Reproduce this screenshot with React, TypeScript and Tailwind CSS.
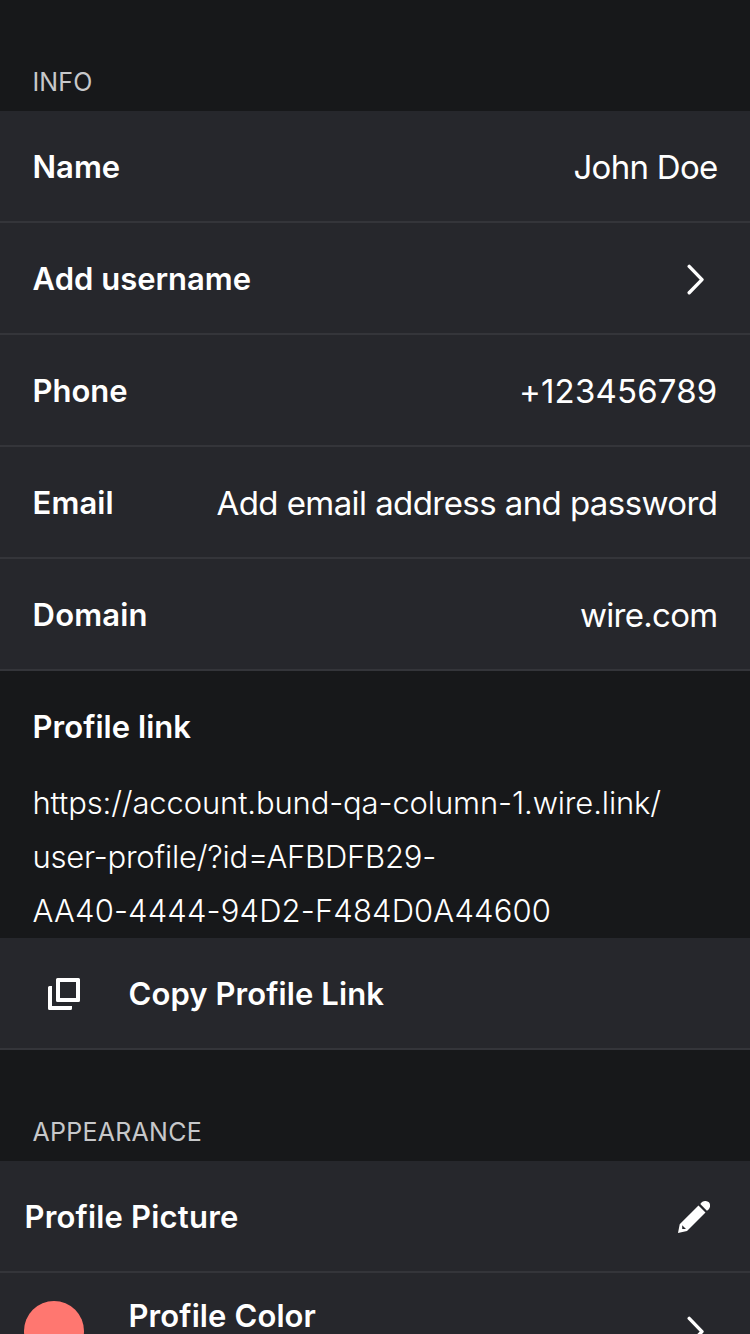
import React from "react";

type Variant = "label" | "value" | "heading" | "link";

const variants: Record<Variant, string> = {
  label: "text-[31px] font-semibold text-white",
  value: "text-[33px] font-normal text-white",
  heading: "text-[25px] font-normal text-[#c7c8ca]",
  link: "text-[31px] font-light text-white",
};

// Distributes letter spacing so that a line of text fills the given width.
function FitText({ text, width, variant }: { text: string; width: number; variant: Variant }) {
  const ref = React.useRef<HTMLSpanElement>(null);
  const [spacing, setSpacing] = React.useState(0);
  React.useLayoutEffect(() => {
    const el = ref.current;
    if (!el) return;
    el.style.letterSpacing = "0px";
    setSpacing((width - el.getBoundingClientRect().width) / text.length);
  }, [text, width]);
  return (
    <span ref={ref} className={`block w-fit whitespace-nowrap leading-[40px] ${variants[variant]}`} style={{ letterSpacing: `${spacing}px` }}>
      {text}
    </span>
  );
}

function Chevron() {
  return (
    <svg className="mr-[11.5px] shrink-0" width="20" height="32" viewBox="0 0 20 32" fill="none" stroke="white" strokeWidth="3.4" strokeLinecap="round" strokeLinejoin="round">
      <path d="M3.2 3.4 16 16.6 3.2 29.8" />
    </svg>
  );
}

function CopyIcon() {
  return (
    <svg className="shrink-0" width="32" height="32" viewBox="0 0 32 32" fill="white">
      <path fillRule="evenodd" d="M9.5 0h21A1.5 1.5 0 0 1 32 1.5v21a1.5 1.5 0 0 1-1.5 1.5h-21A1.5 1.5 0 0 1 8 22.5v-21A1.5 1.5 0 0 1 9.5 0ZM12 4v16h16V4Z" />
      <path d="M1.5 8H4v20h20v2.5a1.5 1.5 0 0 1-1.5 1.5h-21A1.5 1.5 0 0 1 0 30.5v-21A1.5 1.5 0 0 1 1.5 8Z" />
    </svg>
  );
}

function PencilIcon() {
  return (
    <svg className="shrink-0" width="32" height="32" viewBox="0 0 32 32" fill="white">
      <path d="M22.3 3.1C24.3-.5 28.7-.8 30.900 1.300 33 3.500 32.500 7.700 28.900 9.700Z" />
      <path fillRule="evenodd" d="M20.500 4.500 27.500 11.500 9 30 0 32 1.700 23.300ZM4.200 24.300V28H8Z" />
    </svg>
  );
}

function Row({ label, labelWidth, value, valueWidth = 0 }: { label: string; labelWidth: number; value?: string; valueWidth?: number }) {
  return (
    <div className="flex h-28 items-center justify-between border-b-2 border-[#34353a] bg-[#26272c] pt-0.5 pr-[32.5px] pl-[32.6px]">
      <FitText text={label} width={labelWidth} variant="label" />
      {value ? <FitText text={value} width={valueWidth} variant="value" /> : <Chevron />}
    </div>
  );
}

export default function App() {
  return (
    <main className="h-[1334px] w-[750px] overflow-hidden bg-[#17181a] font-['Inter',sans-serif] text-white [font-optical-sizing:none]">
      <header className="flex h-[111px] items-end pb-[9px] pl-[32.5px]">
        <FitText text="INFO" width={60} variant="heading" />
      </header>
      <Row label="Name" labelWidth={87.5} value="John Doe" valueWidth={144} />
      <Row label="Add username" labelWidth={218.5} />
      <Row label="Phone" labelWidth={95} value="+123456789" valueWidth={198.5} />
      <Row label="Email" labelWidth={81} value="Add email address and password" valueWidth={501} />
      <Row label="Domain" labelWidth={115} value="wire.com" valueWidth={137.5} />

      <section className="h-[267px] pt-9 pl-[32.5px]">
        <FitText text="Profile link" width={158.5} variant="label" />
        <div className="mt-9 flex flex-col gap-3.5">
          <FitText text="https://account.bund-qa-column-1.wire.link/" width={628.5} variant="link" />
          <FitText text="user-profile/?id=AFBDFB29-" width={403.5} variant="link" />
          <FitText text="AA40-4444-94D2-F484D0A44600" width={518.5} variant="link" />
        </div>
      </section>

      <div className="flex h-28 items-center gap-[48.5px] border-b-2 border-[#34353a] bg-[#26272c] pt-0.5 pl-12">
        <CopyIcon />
        <FitText text="Copy Profile Link" width={255.5} variant="label" />
      </div>

      <header className="flex h-[111px] items-end pb-[9px] pl-[32.5px]">
        <FitText text="APPEARANCE" width={169.5} variant="heading" />
      </header>
      <div className="flex h-28 items-center justify-between border-b-2 border-[#34353a] bg-[#26272c] pt-0.5 pr-10 pl-[24.5px]">
        <FitText text="Profile Picture" width={214} variant="label" />
        <PencilIcon />
      </div>
      <div className="flex h-28 justify-between bg-[#26272c] pr-[32.5px] pl-6">
        <div className="flex gap-[44.5px]">
          <div className="mt-7 h-[60px] w-[60px] rounded-full bg-[#ff7770]" />
          <div className="mt-[23px]">
            <FitText text="Profile Color" width={187.5} variant="label" />
          </div>
        </div>
        <div className="mt-[42px]">
          <Chevron />
        </div>
      </div>
    </main>
  );
}
